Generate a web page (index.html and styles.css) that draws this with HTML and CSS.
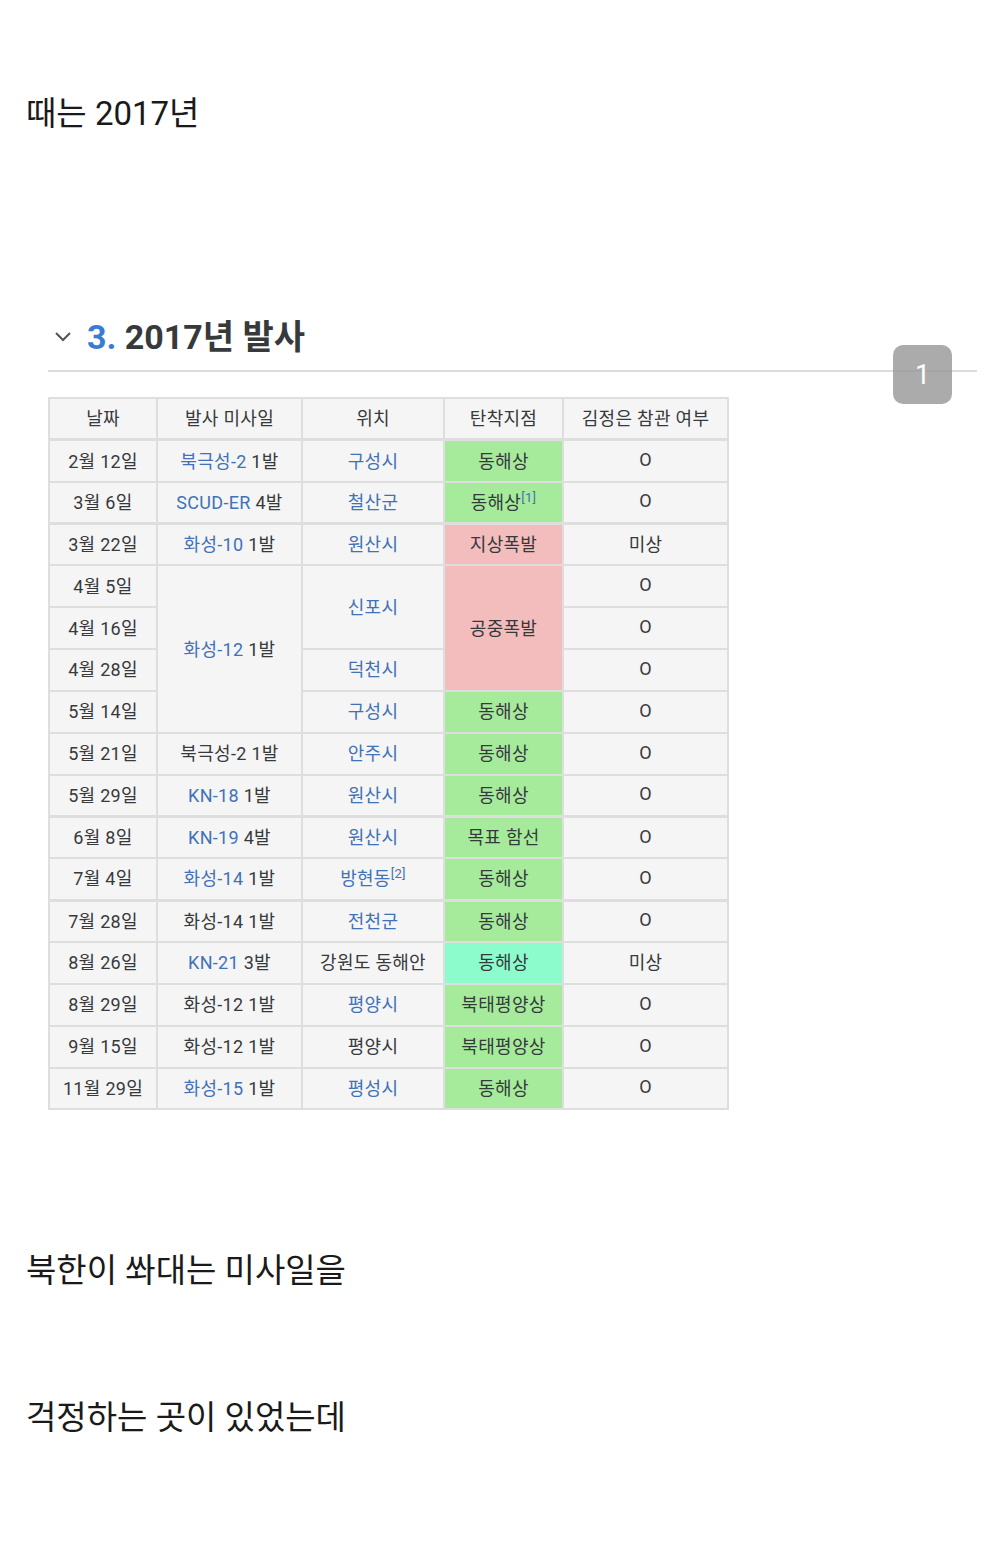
FILE: index.html
```html
<!DOCTYPE html>
<html lang="ko">
<head>
<meta charset="utf-8">
<link rel="stylesheet" href="styles.css">
</head>
<body>
<div class="page">
  <p class="txt first">때는 2017년</p>

  <div class="section">
    <h2 class="heading"><svg class="chev" width="18" height="12" viewBox="0 0 18 12"><path d="M2 2 L9 9 L16 2" fill="none" stroke="#555" stroke-width="2"/></svg><span class="num">3.</span> 2017년 발사</h2>
    <div class="badge">1</div>

    <table class="launch">
      <colgroup>
        <col class="c1"><col class="c2"><col class="c3"><col class="c4"><col class="c5">
      </colgroup>
      <thead>
        <tr><th>날짜</th><th>발사 미사일</th><th>위치</th><th>탄착지점</th><th>김정은 참관 여부</th></tr>
      </thead>
      <tbody>
        <tr><td>2월 12일</td><td><a>북극성-2</a> 1발</td><td><a>구성시</a></td><td class="g">동해상</td><td>O</td></tr>
        <tr><td>3월 6일</td><td><a>SCUD-ER</a> 4발</td><td><a>철산군</a></td><td class="g">동해상<sup>[1]</sup></td><td>O</td></tr>
        <tr class="sep"><td>3월 22일</td><td><a>화성-10</a> 1발</td><td><a>원산시</a></td><td class="r">지상폭발</td><td>미상</td></tr>
        <tr><td>4월 5일</td><td rowspan="4"><a>화성-12</a> 1발</td><td rowspan="2"><a>신포시</a></td><td rowspan="3" class="r">공중폭발</td><td>O</td></tr>
        <tr><td>4월 16일</td><td>O</td></tr>
        <tr><td>4월 28일</td><td><a>덕천시</a></td><td>O</td></tr>
        <tr><td>5월 14일</td><td><a>구성시</a></td><td class="g">동해상</td><td>O</td></tr>
        <tr><td>5월 21일</td><td>북극성-2 1발</td><td><a>안주시</a></td><td class="g">동해상</td><td>O</td></tr>
        <tr><td>5월 29일</td><td><a>KN-18</a> 1발</td><td><a>원산시</a></td><td class="g">동해상</td><td>O</td></tr>
        <tr class="sep"><td>6월 8일</td><td><a>KN-19</a> 4발</td><td><a>원산시</a></td><td class="g">목표 함선</td><td>O</td></tr>
        <tr><td>7월 4일</td><td><a>화성-14</a> 1발</td><td><a>방현동</a><sup>[2]</sup></td><td class="g">동해상</td><td>O</td></tr>
        <tr class="sep"><td>7월 28일</td><td>화성-14 1발</td><td><a>전천군</a></td><td class="g">동해상</td><td>O</td></tr>
        <tr><td>8월 26일</td><td><a>KN-21</a> 3발</td><td>강원도 동해안</td><td class="c">동해상</td><td>미상</td></tr>
        <tr><td>8월 29일</td><td>화성-12 1발</td><td><a>평양시</a></td><td class="g">북태평양상</td><td>O</td></tr>
        <tr><td>9월 15일</td><td>화성-12 1발</td><td>평양시</td><td class="g">북태평양상</td><td>O</td></tr>
        <tr><td>11월 29일</td><td><a>화성-15</a> 1발</td><td><a>평성시</a></td><td class="g">동해상</td><td>O</td></tr>
      </tbody>
    </table>
  </div>

  <p class="txt second">북한이 쏴대는 미사일을</p>
  <p class="txt third">걱정하는 곳이 있었는데</p>
</div>
</body>
</html>
```

FILE: styles.css
```css
* { box-sizing: border-box; }
html, body { margin: 0; padding: 0; background: #fff; }
body {
  font-family: Roboto, "Noto Sans CJK KR", "Noto Sans", sans-serif;
  color: #1a1a1a;
}
.page { width: 1000px; height: 1545px; padding: 0; }

.txt {
  margin: 0;
  padding-left: 26px;
  font-size: 33px;
  line-height: 48px;
  color: #1a1a1a;
}
.first { padding-top: 90px; }

.section {
  position: relative;
  margin: 166px 23px 0 48px;
}
.heading {
  margin: 0;
  height: 68px;
  line-height: 66px;
  padding-left: 6px;
  font-size: 34px;
  font-weight: 700;
  color: #373a3c;
  border-bottom: 2px solid #dcdcdc;
  white-space: nowrap;
}
.chev { margin-right: 15px; vertical-align: middle; position: relative; top: -3px; }
.num { color: #3a7bd5; }

.badge {
  position: absolute;
  left: 845px;
  top: 41px;
  width: 59px;
  height: 59px;
  border-radius: 10px;
  background: rgba(150,150,150,0.8);
  color: #fff;
  font-size: 27px;
  display: flex;
  align-items: center;
  justify-content: center;
}

.launch {
  margin-top: 25px;
  border-collapse: collapse;
  table-layout: fixed;
  width: 679px;
  font-size: 18px;
  color: #373a3c;
  letter-spacing: 0.3px;
}
.c1 { width: 108px; }
.c2 { width: 145px; }
.c3 { width: 142px; }
.c4 { width: 119px; }
.c5 { width: 165px; }

.launch th, .launch td {
  border: 2px solid #dedede;
  background: #f5f5f5;
  text-align: center;
  vertical-align: middle;
  height: 41.85px;
  padding: 0 2px 3px;
  font-weight: 400;
  white-space: nowrap;
}
.launch tr.sep td { border-top-width: 3px; }
.launch thead th { border-bottom-width: 3px; }
.launch td.g { background: #a6eb9c; }
.launch td.r { background: #f4bdbd; }
.launch td.c { background: #8cfccd; }
.launch a { color: #3f72b6; text-decoration: none; }
.launch sup { color: #3f72b6; font-size: 13px; vertical-align: 7px; line-height: 0; }

.second { margin-top: 137px; }
.third { margin-top: 99px; }
```
